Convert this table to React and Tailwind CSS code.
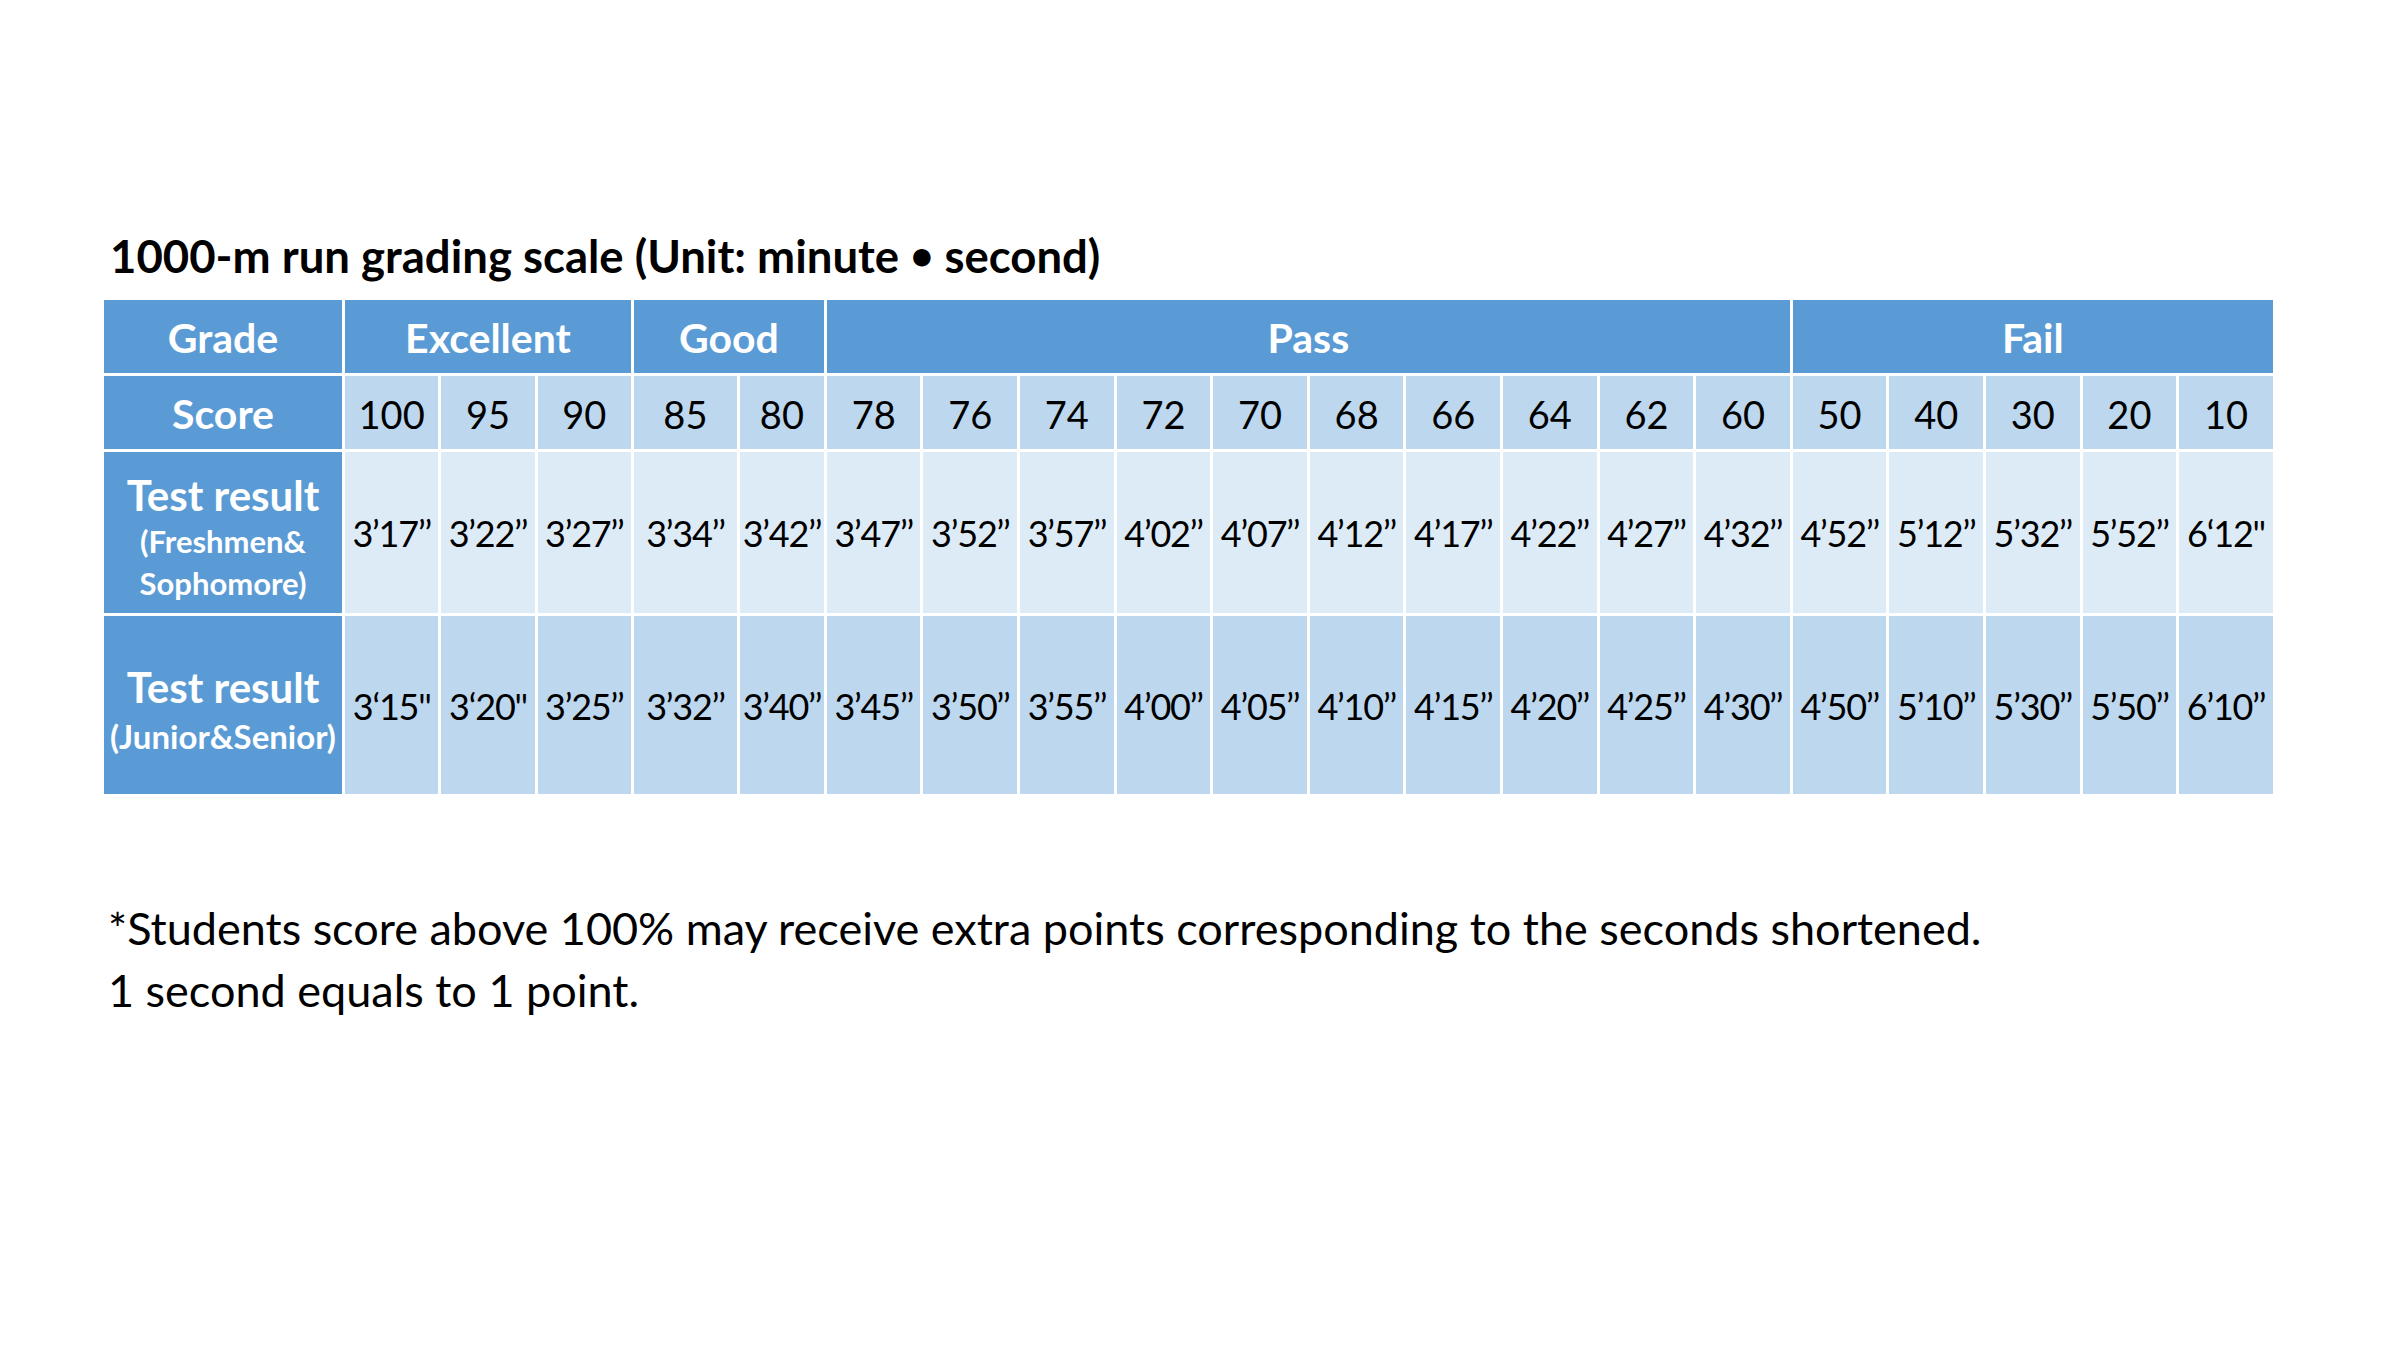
const grades = [
  { label: "Excellent", span: "col-span-3" },
  { label: "Good", span: "col-span-2" },
  { label: "Pass", span: "col-span-10" },
  { label: "Fail", span: "col-span-5" },
];

const scores = ["100", "95", "90", "85", "80", "78", "76", "74", "72", "70", "68", "66", "64", "62", "60", "50", "40", "30", "20", "10"];

const lower = ["3’17’’", "3’22’’", "3’27’’", "3’34’’", "3’42’’", "3’47’’", "3’52’’", "3’57’’", "4’02’’", "4’07’’", "4’12’’", "4’17’’", "4’22’’", "4’27’’", "4’32’’", "4’52’’", "5’12’’", "5’32’’", "5’52’’", "6‘12''"];

const upper = ["3‘15''", "3‘20''", "3’25’’", "3’32’’", "3’40’’", "3’45’’", "3’50’’", "3’55’’", "4’00’’", "4’05’’", "4’10’’", "4’15’’", "4’20’’", "4’25’’", "4’30’’", "4’50’’", "5’10’’", "5’30’’", "5’50’’", "6’10’’"];

const head = "flex items-center justify-center bg-[#5b9bd5] text-white font-bold";
const cell = "flex items-center justify-center whitespace-nowrap";

export default function App() {
  return (
    <div className="min-h-[1350px] w-[2400px] bg-white pl-[104px] pt-[226px] text-black [font-family:Lato,'Open_Sans',sans-serif]">
      <h1 className="ml-[6px] h-[60px] text-[45.5px] font-bold leading-[60px]">
        1000-m run grading scale (Unit: minute{" "}
        <span className="relative -top-[3px] text-[40px] leading-none">•</span> second)
      </h1>

      <div className="mt-[14px] grid w-[2170px] grid-cols-[238px_repeat(3,93.3px)_103px_84px_repeat(15,93.6px)] grid-rows-[73px_73px_161px_178px] gap-[3px]">
        <div className={`${head} pt-[2px] text-[41px]`}>Grade</div>
        {grades.map((g) => (
          <div key={g.label} className={`${head} ${g.span} pt-[2px] text-[41px]`}>
            {g.label}
          </div>
        ))}

        <div className={`${head} pt-[3px] text-[41px]`}>Score</div>
        {scores.map((s) => (
          <div key={s} className={`${cell} bg-[#bdd7ee] pt-[4px] text-[38px]`}>
            {s}
          </div>
        ))}

        <div className={`${head} flex-col pt-[9px]`}>
          <span className="text-[42px] leading-[48px]">Test result</span>
          <span className="text-[31px] leading-[44px]">(Freshmen&amp;</span>
          <span className="text-[31px] leading-[40px]">Sophomore)</span>
        </div>
        {lower.map((t, i) => (
          <div key={i} className={`${cell} bg-[#ddebf7] pt-[1px] text-[36px] tracking-[-1.2px]`}>
            {t}
          </div>
        ))}

        <div className={`${head} flex-col pt-[11px]`}>
          <span className="text-[42px] leading-[50px]">Test result</span>
          <span className="text-[33px] leading-[48px]">(Junior&amp;Senior)</span>
        </div>
        {upper.map((t, i) => (
          <div key={i} className={`${cell} bg-[#bdd7ee] pt-[1px] text-[36px] tracking-[-1.2px]`}>
            {t}
          </div>
        ))}
      </div>

      <div className="ml-[4px] mt-[103px] text-[45px] leading-[62px]">
        <p>*Students score above 100% may receive extra points corresponding to the seconds shortened.</p>
        <p>1 second equals to 1 point.</p>
      </div>
    </div>
  );
}
